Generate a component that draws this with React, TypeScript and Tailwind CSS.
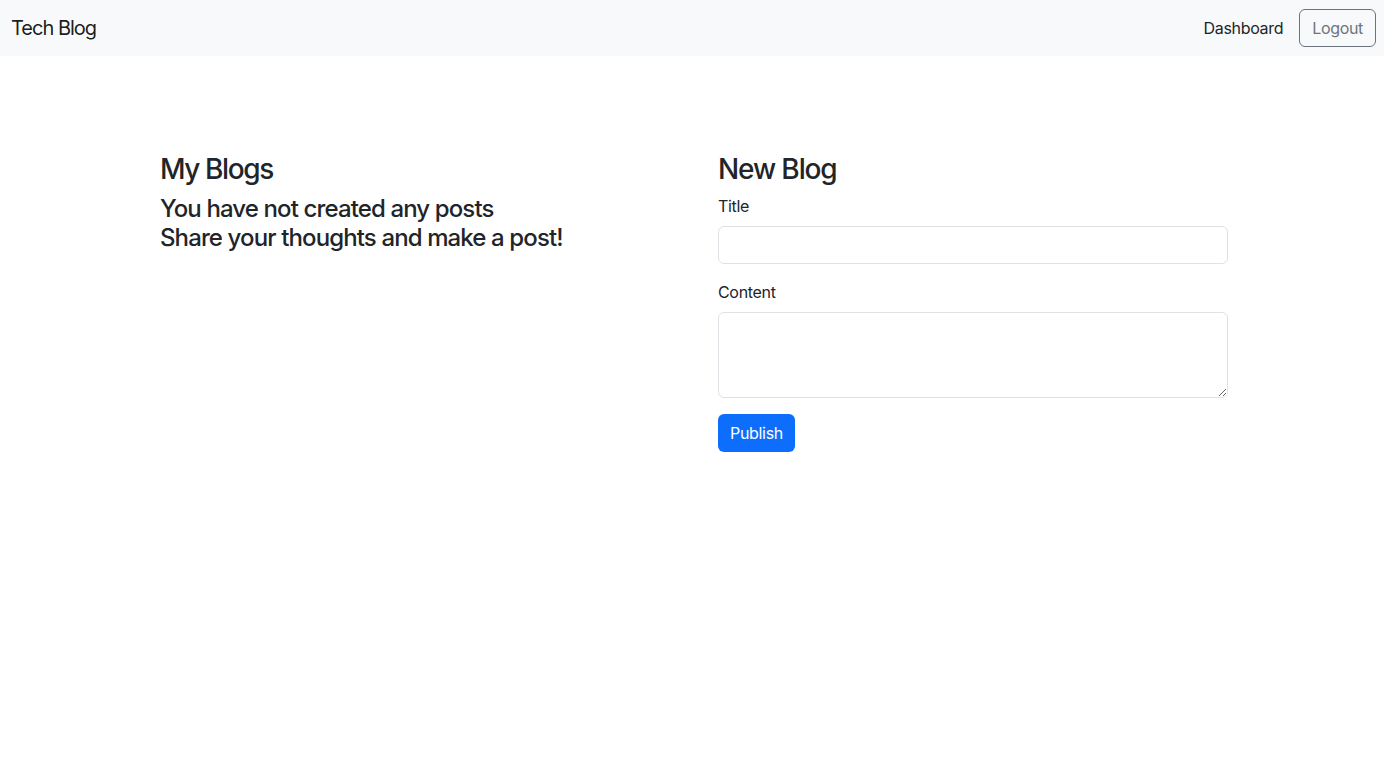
export default function App() {
  return (
    <div className="min-h-screen bg-white text-[#212529] font-['Inter','Liberation_Sans',sans-serif] tracking-[-0.02em]">
      <nav className="h-14 bg-[#f8f9fa] flex items-center justify-between pl-[11px] pr-2">
        <a className="text-[20px] leading-[30px] text-black/90 tracking-[-0.05em]">Tech Blog</a>
        <div className="flex items-center gap-4">
          <a className="text-base text-[#212529]">Dashboard</a>
          <button className="h-[38px] px-3 rounded-md border border-[#6c757d] text-base text-[#6c757d]">
            Logout
          </button>
        </div>
      </nav>

      <main className="flex pt-24 pl-[160px]">
        <section className="w-[558px] tracking-[-0.055em]">
          <h3 className="text-[28px] leading-[34px] font-medium mb-2 tracking-[-0.05em]">My Blogs</h3>
          <h4 className="text-2xl leading-[29px] font-medium">You have not created any posts</h4>
          <h4 className="text-2xl leading-[29px] font-medium">Share your thoughts and make a post!</h4>
        </section>

        <section className="w-[510px]">
          <h3 className="text-[28px] leading-[34px] font-medium mb-2 tracking-[-0.04em]">New Blog</h3>
          <form className="flex flex-col">
            <label className="text-base leading-6 mb-2">Title</label>
            <input className="h-[38px] rounded-md border border-[#dee2e6] px-3 mb-4" />
            <label className="text-base leading-6 mb-2">Content</label>
            <textarea rows={3} className="h-[86px] rounded-md border border-[#dee2e6] px-3 py-1.5 mb-4" />
            <div>
              <button type="button" className="h-[38px] px-3 rounded-md bg-[#0d6efd] text-white text-base">
                Publish
              </button>
            </div>
          </form>
        </section>
      </main>
    </div>
  );
}
